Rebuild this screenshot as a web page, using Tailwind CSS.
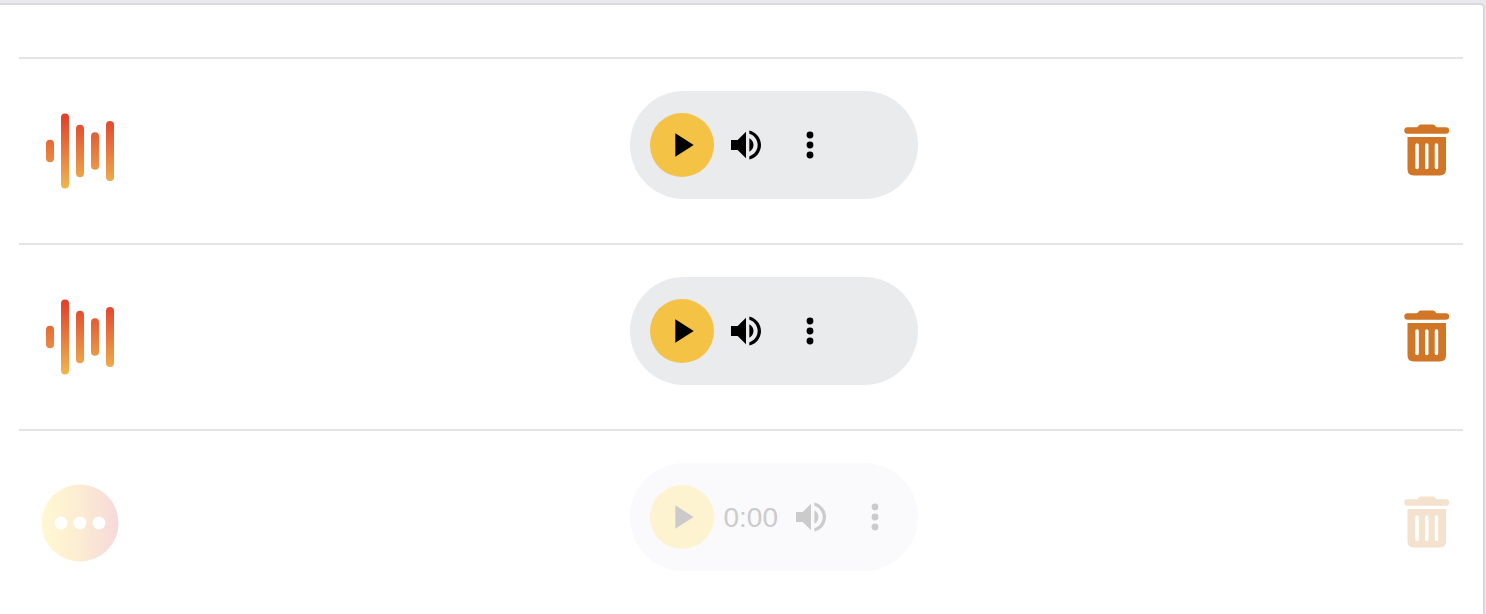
<!DOCTYPE html>
<html lang="en">
<head>
<meta charset="utf-8">
<title>Recordings</title>
<script src="https://cdn.jsdelivr.net/npm/@tailwindcss/browser@4"></script>
</head>
<body class="h-[614px] overflow-hidden bg-[#e9e9ed] pt-[3px] pr-px">
<svg class="absolute h-0 w-0">
  <defs>
    <symbol id="play" viewBox="0 0 24 24"><path d="M8 5v14l11-7z"/></symbol>
    <symbol id="volume" viewBox="0 0 24 24"><path d="M3 9v6h4l5 5V4L7 9H3zm13.500 3c0-1.770-1.020-3.290-2.500-4.030v8.050c1.480-.73 2.500-2.250 2.500-4.020zM14 3.230v2.060c2.890.86 5 3.540 5 6.710s-2.110 5.850-5 6.710v2.060c4.010-.91 7-4.490 7-8.770s-2.990-7.860-7-8.770z"/></symbol>
    <symbol id="more" viewBox="0 0 24 24"><circle cx="12" cy="6" r="2.050"/><circle cx="12" cy="12" r="2.050"/><circle cx="12" cy="18" r="2.050"/></symbol>
    <symbol id="trash" viewBox="0 0 46 53">
      <rect x=".3" y="3.300" width="44.800" height="6.400" rx="3.200"/>
      <path d="M12 4C13.800 4 14 .4 17 .4H28.800C31.600 .4 31.800 4 34 4Z"/>
      <path fill-rule="evenodd" d="M3.500 13H42V45.200Q42 51.400 35.800 51.400H9.700Q3.500 51.400 3.500 45.200ZM11.300 21V43.500A1.750 1.750 0 0 0 14.800 43.500V21A1.750 1.750 0 0 0 11.300 21ZM21 21V43.500A1.750 1.750 0 0 0 24.500 43.500V21A1.750 1.750 0 0 0 21 21ZM30.700 21V43.500A1.750 1.750 0 0 0 34.200 43.500V21A1.750 1.750 0 0 0 30.700 21Z"/>
    </symbol>
    <linearGradient id="wg" gradientUnits="userSpaceOnUse" x1="0" y1="3" x2="0" y2="79"><stop offset="0" stop-color="#e03c2b"/><stop offset="1" stop-color="#efb74f"/></linearGradient>
    <linearGradient id="dg"><stop offset="0" stop-color="#fff8d3"/><stop offset=".4" stop-color="#fdefd2"/><stop offset="1" stop-color="#f6d9d9"/></linearGradient>
  </defs>
</svg>
<main class="h-[640px] rounded-tr-[5px] border-t-2 border-r-2 border-[#d8d8de] bg-white pt-[52px] pr-5 pl-[19px]">
  <div class="flex h-[186px] items-start justify-between border-t-2 border-[#e4e4e5] pr-[13px] pl-[22px]">
    <svg class="mt-[51px] h-20 w-20 shrink-0" viewBox="0 0 80 80" fill="url(#wg)"><rect x="5" y="29.700" width="8" height="22.600" rx="4"/><rect x="20" y="3.400" width="8" height="75.200" rx="4"/><rect x="35" y="14.700" width="8" height="52.600" rx="4"/><rect x="50" y="22.200" width="8" height="37.600" rx="4"/><rect x="65" y="11" width="8" height="60" rx="4"/></svg>
    <div class="mt-8 mr-[486px] ml-auto flex h-[108px] w-[288px] items-center rounded-full bg-[#e9ebed] pl-5">
      <div class="flex size-16 items-center justify-center rounded-full bg-[#f4c244]"><svg class="size-10"><use href="#play"/></svg></div>
      <div class="flex size-16 items-center justify-center"><svg class="size-10"><use href="#volume"/></svg></div>
      <div class="flex size-16 items-center justify-center"><svg class="size-10"><use href="#more"/></svg></div>
    </div>
    <svg class="mt-[65px] h-[53px] w-[46px] shrink-0 text-[#d17627]" fill="currentColor"><use href="#trash"/></svg>
  </div>
  <div class="flex h-[186px] items-start justify-between border-t-2 border-[#e4e4e5] pr-[13px] pl-[22px]">
    <svg class="mt-[51px] h-20 w-20 shrink-0" viewBox="0 0 80 80" fill="url(#wg)"><rect x="5" y="29.700" width="8" height="22.600" rx="4"/><rect x="20" y="3.400" width="8" height="75.200" rx="4"/><rect x="35" y="14.700" width="8" height="52.600" rx="4"/><rect x="50" y="22.200" width="8" height="37.600" rx="4"/><rect x="65" y="11" width="8" height="60" rx="4"/></svg>
    <div class="mt-8 mr-[486px] ml-auto flex h-[108px] w-[288px] items-center rounded-full bg-[#e9ebed] pl-5">
      <div class="flex size-16 items-center justify-center rounded-full bg-[#f4c244]"><svg class="size-10"><use href="#play"/></svg></div>
      <div class="flex size-16 items-center justify-center"><svg class="size-10"><use href="#volume"/></svg></div>
      <div class="flex size-16 items-center justify-center"><svg class="size-10"><use href="#more"/></svg></div>
    </div>
    <svg class="mt-[65px] h-[53px] w-[46px] shrink-0 text-[#d17627]" fill="currentColor"><use href="#trash"/></svg>
  </div>
  <div class="flex h-[186px] items-start justify-between border-t-2 border-[#e4e4e5] pr-[13px] pl-[22px]">
    <svg class="mt-[52px] h-20 w-20 shrink-0" viewBox="0 0 80 80"><circle cx="39" cy="40" r="38.500" fill="url(#dg)"/><g fill="#fff"><circle cx="20" cy="40" r="6.500"/><circle cx="39" cy="40" r="6.500"/><circle cx="58" cy="40" r="6.500"/></g></svg>
    <div class="mt-8 mr-[486px] ml-auto flex h-[108px] w-[288px] items-center rounded-full bg-[#fafafc] pl-5 text-[#cbcbcb]">
      <div class="flex size-16 items-center justify-center rounded-full bg-[#fef3d0]"><svg class="size-10" fill="currentColor"><use href="#play"/></svg></div>
      <div class="w-[65px] pt-px pl-[9.500px] font-['Liberation_Sans',sans-serif] text-[28px] leading-8">0:00</div>
      <div class="flex size-16 items-center justify-center"><svg class="size-10" fill="currentColor"><use href="#volume"/></svg></div>
      <div class="flex size-16 items-center justify-center"><svg class="size-10" fill="currentColor"><use href="#more"/></svg></div>
    </div>
    <svg class="mt-[65px] h-[53px] w-[46px] shrink-0 text-[#f4e2ce]" fill="currentColor"><use href="#trash"/></svg>
  </div>
</main>
</body>
</html>
